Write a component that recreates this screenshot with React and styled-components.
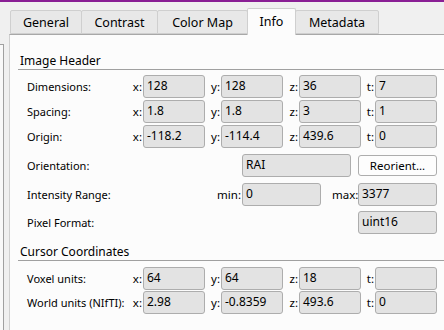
import React from "react";
import styled, { createGlobalStyle } from "styled-components";

const GlobalStyle = createGlobalStyle`
  html, body {
    margin: 0;
    padding: 0;
    background: #f0f0f0;
    font-family: "Noto Sans", "DejaVu Sans", sans-serif;
    color: #000;
  }
`;

const Page = styled.div`
  width: 444px;
  height: 330px;
  overflow: hidden;
  display: flex;
  flex-direction: column;
`;

const TopBar = styled.div`
  height: 2px;
  background: #8a1f95;
  flex-shrink: 0;
`;

const Body = styled.div`
  flex: 1;
  display: flex;
  min-height: 0;
`;

const SideEdge = styled.div`
  width: 3px;
  margin-top: 42px;
  background: #f9f9f9;
  border-top: 1px solid #a0a0a0;
  border-right: 1px solid #a0a0a0;
  margin-right: 5px;
`;

const TabWidget = styled.div`
  flex: 1;
  display: flex;
  flex-direction: column;
  padding-top: 6px;
`;

const TabBar = styled.div`
  display: flex;
  align-items: flex-end;
  padding-left: 1px;
  height: 26px;
  position: relative;
  z-index: 1;
`;

const Tab = styled.div`
  box-sizing: border-box;
  width: ${(p) => p.$w}px;
  height: ${(p) => (p.$active ? 27 : 24)}px;
  margin-bottom: ${(p) => (p.$active ? -1 : 0)}px;
  margin-left: ${(p) => (p.$first ? 0 : -1)}px;
  background: ${(p) => (p.$active ? "#fcfcfc" : "#e8e8e8")};
  border: 1px solid #cfcfcf;
  border-bottom: ${(p) => (p.$active ? "none" : "1px solid #cfcfcf")};
  border-radius: 2px 2px 0 0;
  display: flex;
  align-items: center;
  justify-content: center;
  font-size: 12.5px;
  padding-bottom: ${(p) => (p.$active ? 2 : 0)}px;
  position: relative;
  z-index: ${(p) => (p.$active ? 2 : 1)};
`;

const Pane = styled.div`
  flex: 1;
  background: #fcfcfc;
  border-top: 1px solid #a8a8a8;
  border-left: 1px solid #d0d0d0;
  padding: 18px 0 0 8px;
`;

const SectionTitle = styled.div`
  height: 16px;
  line-height: 16px;
  font-size: 12px;
  padding-left: 2px;
  border-bottom: 1px solid #a0a0a0;
  margin-top: ${(p) => p.$top || 0}px;
`;

const Rows = styled.div`
  padding: ${(p) => p.$pad}px 7px 0 9px;
`;

const Row = styled.div`
  display: flex;
  align-items: center;
  height: 23px;
  margin-top: ${(p) => p.$gap || 0}px;
`;

const Label = styled.div`
  flex: 1;
  font-size: 11px;
  white-space: nowrap;
`;

const Axis = styled.div`
  width: ${(p) => p.$w}px;
  text-align: right;
  padding-right: 1px;
  box-sizing: border-box;
  font-size: 11.5px;
  flex-shrink: 0;
`;

const Field = styled.div`
  box-sizing: border-box;
  width: ${(p) => p.$w || 62}px;
  height: 23px;
  flex-shrink: 0;
  background: #e3e3e3;
  border: 1px solid #adadad;
  border-radius: 3px;
  padding-left: 3px;
  font-size: 12px;
  line-height: 20px;
  white-space: nowrap;
  overflow: hidden;
`;

const Button = styled.div`
  box-sizing: border-box;
  width: 79px;
  height: 21px;
  margin-left: 7px;
  background: #fdfdfd;
  border: 1px solid #adadad;
  border-radius: 3px;
  font-size: 11.5px;
  display: flex;
  align-items: center;
  justify-content: center;
`;

const Spacer = styled.div`
  width: ${(p) => p.$w}px;
  flex-shrink: 0;
`;

const tabs = [
  { name: "General", w: 72 },
  { name: "Contrast", w: 77 },
  { name: "Color Map", w: 91 },
  { name: "Info", w: 49, active: true },
  { name: "Metadata", w: 84 },
];

const CoordRow = ({ label, values, gap }) => (
  <Row $gap={gap}>
    <Label>{label}</Label>
    <Axis $w={11}>x:</Axis>
    <Field>{values[0]}</Field>
    <Axis $w={16}>y:</Axis>
    <Field>{values[1]}</Field>
    <Axis $w={16}>z:</Axis>
    <Field>{values[2]}</Field>
    <Axis $w={14}>t:</Axis>
    <Field>{values[3]}</Field>
  </Row>
);

export default function App() {
  return (
    <Page>
      <GlobalStyle />
      <TopBar />
      <Body>
        <SideEdge />
        <TabWidget>
          <TabBar>
            {tabs.map((t, i) => (
              <Tab key={t.name} $w={t.w} $active={t.active} $first={i === 0}>
                {t.name}
              </Tab>
            ))}
          </TabBar>
          <Pane>
            <SectionTitle>Image Header</SectionTitle>
            <Rows $pad={5}>
              <CoordRow label="Dimensions:" values={["128", "128", "36", "7"]} />
              <CoordRow label="Spacing:" values={["1.8", "1.8", "3", "1"]} gap={2} />
              <CoordRow label="Origin:" values={["-118.2", "-114.4", "439.6", "0"]} gap={2} />
              <Row $gap={6}>
                <Label>Orientation:</Label>
                <Field $w={109}>RAI</Field>
                <Button>Reorient...</Button>
              </Row>
              <Row $gap={6}>
                <Label>Intensity Range:</Label>
                <Axis $w={26}>min:</Axis>
                <Field $w={79}>0</Field>
                <Spacer $w={11} />
                <Axis $w={26}>max:</Axis>
                <Field $w={79}>3377</Field>
              </Row>
              <Row $gap={5}>
                <Label>Pixel Format:</Label>
                <Field $w={79}>uint16</Field>
              </Row>
            </Rows>
            <SectionTitle $top={10}>Cursor Coordinates</SectionTitle>
            <Rows $pad={6}>
              <CoordRow label="Voxel units:" values={["64", "64", "18", ""]} />
              <CoordRow label="World units (NIfTI):" values={["2.98", "-0.8359", "493.6", "0"]} gap={1} />
            </Rows>
          </Pane>
        </TabWidget>
      </Body>
    </Page>
  );
}
